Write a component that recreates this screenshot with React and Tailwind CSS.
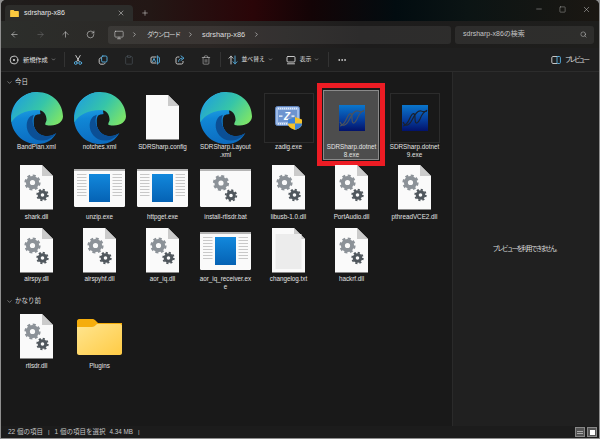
import React from 'react'
import {
  ArrowLeft, ArrowRight, ArrowUp, RotateCw, Monitor, ChevronRight, ChevronDown, Plus, X, Minus, Square,
  Clipboard, Trash2, MoreHorizontal, Search,
} from 'lucide-react'

const font = { fontFamily: '"Liberation Sans", "Noto Sans CJK JP", sans-serif' }
const BLUE = '#58b4e8'
const GRAY = '#d8d8d8'

// big gear sits at the origin, small one below right
const Gears = ({ x = 0, y = 0 }) => (
  <g transform={`translate(${x} ${y})`}>
    <circle r="4.6" fill="none" stroke="#8c9298" strokeWidth="4" />
    <circle r="7" fill="none" stroke="#8c9298" strokeWidth="2.2" strokeDasharray="3 2.5" />
    <circle cx="10" cy="12.5" r="3.3" fill="none" stroke="#50575d" strokeWidth="3" />
    <circle cx="10" cy="12.5" r="5.3" fill="none" stroke="#50575d" strokeWidth="1.8" strokeDasharray="2.1 2" />
  </g>
)

const Page = ({ children }) => (
  <svg width="33" height="45" viewBox="0 0 33 45">
    <path d="M0 0H22L33 11V44.5H0Z" fill="#fafafa" />
    <path d="M22 0V11H33Z" fill="#cbcbcb" />
    {children}
  </svg>
)

const DllIcon = () => <Page><Gears x="12.5" y="17.5" /></Page>

const TxtIcon = () => <Page><rect x="3.5" y="6" width="26" height="35" fill="#ececec" /></Page>

const ConfigIcon = () => <Page />

const BatIcon = () => (
  <svg width="51" height="38" viewBox="0 0 51 38">
    <rect width="51" height="38" rx="1.5" fill="#fafafa" />
    <rect width="51" height="2" fill="#b4b4b4" />
    <Gears x="21" y="14" />
  </svg>
)

const WindowIcon = ({ id }) => (
  <svg width="51" height="38" viewBox="0 0 51 38">
    <defs>
      <linearGradient id={id} x1="0" y1="0" x2="0" y2="1">
        <stop offset="0" stopColor="#1288dc" />
        <stop offset="1" stopColor="#0562b4" />
      </linearGradient>
    </defs>
    <rect width="51" height="38" rx="1.5" fill="#fafafa" />
    <rect width="51" height="2" fill="#b4b4b4" />
    <rect x="15" y="5" width="21" height="28" fill={`url(#${id})`} />
    {[5, 8, 11, 14, 17, 20, 23, 26].map((y) => (
      <g key={y}>
        <rect x="3" y={y} width="9.5" height="1" fill="#c8c8c8" />
        <rect x="38.5" y={y} width="9.5" height="1" fill="#c8c8c8" />
      </g>
    ))}
  </svg>
)

const EdgeIcon = ({ id }) => (
  <svg width="52" height="52" viewBox="0 0 155 155">
    <defs>
      <linearGradient id={`${id}a`} x1="0.3" y1="0" x2="0.4" y2="1">
        <stop offset="0" stopColor="#36c3f2" />
        <stop offset="0.5" stopColor="#1087d6" />
        <stop offset="1" stopColor="#0c6cc0" />
      </linearGradient>
      <linearGradient id={`${id}b`} x1="0" y1="0.2" x2="1" y2="0.7">
        <stop offset="0" stopColor="#1f9fdc" />
        <stop offset="0.55" stopColor="#36c5a8" />
        <stop offset="1" stopColor="#7ae36a" />
      </linearGradient>
    </defs>
    <path d="M78 0C35 0 0 35 0 78C0 120 35 155 78 155C108 155 124 142 135 122C112 138 84 132 72 110C62 90 72 72 88 66L78 0Z" fill={`url(#${id}a)`} />
    <path d="M72 70C86 62 106 68 112 84L134 122C112 138 84 132 74 110C66 94 66 78 72 70Z" fill="#191919" />
    <path d="M78 0C125 0 155 36 155 72C155 92 132 104 104 98C100 96 104 90 106 84C106 68 98 54 78 54C42 54 14 70 1 90C0 40 35 0 78 0Z" fill={`url(#${id}b)`} />
    <path d="M58 72C44 84 42 110 58 130C74 150 112 152 135 122C112 138 84 132 72 110C64 96 62 84 68 68Z" fill="#0b4f95" />
  </svg>
)

const ZadigIcon = () => (
  <svg width="27" height="24" viewBox="0 0 27 24">
    <rect x="0.5" y="0.5" width="24" height="19" rx="2" fill="#9dbbe8" stroke="#5f82ba" strokeWidth="1" />
    <rect x="3" y="4" width="19" height="12" fill="#6e94cf" />
    <path d="M3 2.5H22M3 17.8H22" stroke="#e2ecfa" strokeWidth="1.4" strokeDasharray="1 1" />
    <rect x="4" y="9.5" width="3.5" height="1.2" fill="#fff" />
    <rect x="16.5" y="9.5" width="3" height="1.2" fill="#fff" />
    <text x="12" y="14" textAnchor="middle" fontSize="10" fontWeight="700" fontStyle="italic" fill="#fff" fontFamily="Liberation Sans">Z</text>
    <path d="M20 11L27 13.5V18C27 21 23 23 20 24C17 23 13 21 13 18V13.5Z" fill="#f4c22c" />
    <path d="M20 11V17.5H13V13.5ZM20 17.5H27V18C27 21 23 23 20 24Z" fill="#3f83d8" />
  </svg>
)

const SdrIcon = ({ id, line }) => (
  <svg width="26" height="26" viewBox="0 0 26 26">
    <defs>
      <linearGradient id={id} x1="0" y1="0" x2="0" y2="1">
        <stop offset="0" stopColor="#0a76cc" />
        <stop offset="0.55" stopColor="#063f9e" />
        <stop offset="1" stopColor="#02126a" />
      </linearGradient>
    </defs>
    <rect width="26" height="26" fill={`url(#${id})`} />
    <path d="M1 21C5 21 7 15 9 11C11 7 13 8 13 13C13 19 15 20 18 14C20 9 22 6 25 6" fill="none" stroke={line} strokeWidth="1.2" />
    <path d="M1 17C3 22 7 21 10 15C13 9 16 5 19 6C22 7 24 7 25 5" fill="none" stroke={line} strokeWidth="1.2" />
  </svg>
)

const FolderIcon = () => (
  <svg width="45" height="36" viewBox="0 0 45 36">
    <defs>
      <linearGradient id="folderFront" x1="0" y1="0" x2="1" y2="1">
        <stop offset="0" stopColor="#ffe58f" />
        <stop offset="1" stopColor="#ffcb45" />
      </linearGradient>
    </defs>
    <path d="M2 0H16C17 0 18 1 19 2L21 4H45V12H0V2C0 1 1 0 2 0Z" fill="#f5ad0c" />
    <path d="M0 34V8H15C17 8 18 7 20 5H43C44 5 45 6 45 7V34C45 35 44 36 43 36H2C1 36 0 35 0 34Z" fill="url(#folderFront)" />
  </svg>
)

// toolbar glyphs
const Glyph = ({ children, w = 10 }) => (
  <svg width={w} height="10" viewBox="0 0 10 10" fill="none" strokeWidth="0.9" strokeLinecap="round" strokeLinejoin="round">{children}</svg>
)

const NewGlyph = () => <Glyph><circle cx="5" cy="5" r="3.9" stroke={GRAY} /><circle cx="5" cy="5" r="1.1" fill={GRAY} /></Glyph>
const CutGlyph = () => (
  <Glyph>
    <path d="M2.8 .5L6.2 6.5M7.2 .5L3.8 6.5" stroke={GRAY} />
    <circle cx="2.8" cy="8" r="1.4" stroke={BLUE} />
    <circle cx="7.2" cy="8" r="1.4" stroke={BLUE} />
  </Glyph>
)
const CopyGlyph = () => (
  <Glyph>
    <rect x="3.6" y="1" width="5.4" height="6" rx="1.2" stroke={BLUE} />
    <path d="M3 2.8C1.8 3 1.2 3.6 1.2 4.6V7.4C1.2 8.4 2 9.2 3 9.2H5.4C6.2 9.2 6.8 8.8 7 8.2" stroke={GRAY} />
  </Glyph>
)
const RenameGlyph = () => (
  <Glyph>
    <path d="M6 2H2C1.4 2 1 2.4 1 3V7C1 7.6 1.4 8 2 8H6" stroke={GRAY} />
    <path d="M7.4 .8V9.2M8 2H8.6C9 2 9.4 2.4 9.4 3V7C9.4 7.6 9 8 8.6 8H8" stroke={BLUE} />
    <path d="M2.6 6.6L4 3.4L5.4 6.6" stroke={BLUE} />
  </Glyph>
)
const ShareGlyph = () => (
  <Glyph>
    <path d="M4 2H2.4C1.6 2 1 2.6 1 3.4V7.6C1 8.4 1.6 9 2.4 9H6.6C7.4 9 8 8.4 8 7.6V6.4" stroke={GRAY} />
    <path d="M3.6 6.4C3.8 4.4 5 3.2 7 3.2M6 .9L9 3.2L6 5.4" stroke={BLUE} />
  </Glyph>
)
const SortGlyph = () => (
  <Glyph>
    <path d="M3 9V1.2M1 3.2L3 1.2L5 3.2" stroke={GRAY} />
    <path d="M7 1V8.8M5 6.8L7 8.8L9 6.8" stroke={BLUE} />
  </Glyph>
)
const ViewGlyph = () => <Glyph><rect x="1" y="1.5" width="8" height="5.5" rx="1" stroke={GRAY} /><path d="M1.5 8.8H8.5" stroke={GRAY} /></Glyph>
const PreviewGlyph = () => (
  <Glyph>
    <path d="M6 1.5H2C1.4 1.5 .8 2 .8 2.7V7.3C.8 8 1.4 8.5 2 8.5H6" stroke={GRAY} />
    <rect x="6" y="1.5" width="3.4" height="7" rx="1" stroke={BLUE} />
  </Glyph>
)

const FileItem = ({ icon, name, selected, box, h = 'h-[45px]', textClass = 'h-[15px] mt-[3px]' }) => (
  <div className="relative flex w-[63px] flex-col items-center">
    {selected && <div className="absolute left-[3px] top-[-2px] h-[70px] w-[56px] border border-[#8a8a8a] bg-[#4d4d4d]" />}
    <div className={`relative flex ${h} w-[52px] items-center justify-center`}>
      {box ? (
        <div className={`flex h-[50px] w-[50px] items-center justify-center border ${selected ? 'border-transparent' : 'border-[#2c2c2c]'}`}>{icon}</div>
      ) : icon}
    </div>
    <div className={`relative w-[60px] whitespace-pre-line text-center text-[6.3px] leading-[8px] text-[#e4e4e4] ${textClass}`}>{name}</div>
    {selected && <div className="absolute left-[-3px] top-[-9px] h-[83px] w-[68px] border-[5px] border-[#ed1c24]" />}
  </div>
)

const ToolIcon = ({ children }) => <div className="flex w-[25.6px] justify-center">{children}</div>

const SectionHead = ({ label }) => (
  <div className="flex h-[14px] items-center gap-[2px] pl-[1px] text-[#d8d8d8]">
    <ChevronDown size={7} strokeWidth={1.5} />
    <span className="text-[6.5px]">{label}</span>
  </div>
)

const Header = () => (
  <div className="bg-[linear-gradient(90deg,#1f1d1c_0%,#231715_25%,#2a0508_42%,#130406_52%,#020c10_66%,#0b1414_78%,#1b1712_100%)]">
    {/* tabs */}
    <div className="flex h-[21px] items-end pl-[4px]">
      <div className="flex h-[16px] w-[128px] items-center rounded-t-[4px] bg-[#2c2c2a] pl-[5px] pr-[8px]">
        <svg width="9" height="7" viewBox="0 0 10 8">
          <path d="M0 1C0 .5 .5 0 1 0H4L5 1H9C9.5 1 10 1.5 10 2V8H0Z" fill="#fbc93f" />
        </svg>
        <span className="ml-[5px] flex-1 text-[7px] text-[#e6e6e6]">sdrsharp-x86</span>
        <X size={8} strokeWidth={1.5} className="text-[#e0e0e0]" />
      </div>
      <div className="ml-[8px] flex h-[16px] items-center">
        <Plus size={8} strokeWidth={1.5} className="text-[#e0e0e0]" />
      </div>
      <div className="ml-auto flex h-[21px] items-center gap-[16px] pb-[3px] pr-[8px] text-[#e0e0e0]">
        <Minus size={8} strokeWidth={1.2} />
        <Square size={7} strokeWidth={1.2} />
        <X size={9} strokeWidth={1.2} />
      </div>
    </div>
    {/* nav */}
    <div className="flex h-[27px] items-center bg-[linear-gradient(90deg,#2c2e2b_0%,#2b2624_35%,#1d1c1c_60%,#1e1e1c_100%)]">
      <div className="flex w-[107px] items-center text-[#dcdcdc]">
        <div className="flex w-[26px] justify-center"><ArrowLeft size={9} strokeWidth={1.5} /></div>
        <div className="flex w-[26px] justify-center text-[#6c6c6c]"><ArrowRight size={9} strokeWidth={1.5} /></div>
        <div className="flex w-[25px] justify-center"><ArrowUp size={9} strokeWidth={1.5} /></div>
        <div className="flex w-[25px] justify-center"><RotateCw size={9} strokeWidth={1.5} /></div>
      </div>
      <div className="flex h-[18px] w-[343px] items-center rounded-[3px] bg-white/[0.07] pl-[6px] text-[#dedede]">
        <Monitor size={10} strokeWidth={1.3} />
        <ChevronRight size={7} className="ml-[7px]" />
        <span className="ml-[9px] text-[6.5px] tracking-[-1px]">ダウンロード</span>
        <ChevronRight size={7} className="ml-[7px]" />
        <span className="ml-[8px] text-[7.4px]">sdrsharp-x86</span>
        <ChevronRight size={7} className="ml-[8px]" />
      </div>
      <div className="ml-[4px] flex h-[18px] w-[139px] items-center rounded-[3px] bg-white/[0.07] pl-[8px] pr-[7px]">
        <span className="flex-1 text-[7px] text-[#c4c4c4]">sdrsharp-x86の検索</span>
        <Search size={7} strokeWidth={1.6} className="text-[#d4d4d4]" />
      </div>
    </div>
  </div>
)

const Toolbar = () => (
  <div className="flex h-[24px] items-center border-b border-[#2c2c2c] bg-[#1f1f1f] text-[#e0e0e0]">
    <div className="flex w-[63px] items-center pl-[8px]">
      <NewGlyph />
      <span className="ml-[4px] text-[6.2px]">新規作成</span>
      <ChevronDown size={5} className="ml-[3px]" />
    </div>
    <div className="h-[15px] w-px bg-[#333]" />
    <div className="flex items-center">
      <ToolIcon><CutGlyph /></ToolIcon>
      <ToolIcon><CopyGlyph /></ToolIcon>
      <ToolIcon><Clipboard size={10} strokeWidth={1.2} className="text-[#59636a]" /></ToolIcon>
      <ToolIcon><RenameGlyph /></ToolIcon>
      <ToolIcon><ShareGlyph /></ToolIcon>
      <ToolIcon><Trash2 size={10} strokeWidth={1.2} className="text-[#d8d8d8]" /></ToolIcon>
    </div>
    <div className="ml-[1px] h-[15px] w-px bg-[#333]" />
    <div className="ml-[7px] flex items-center">
      <SortGlyph />
      <span className="ml-[4px] text-[5.8px]">並べ替え</span>
      <ChevronDown size={5} className="ml-[3px]" />
    </div>
    <div className="ml-[13px] flex items-center">
      <ViewGlyph />
      <span className="ml-[4px] text-[5.8px]">表示</span>
      <ChevronDown size={5} className="ml-[3px]" />
    </div>
    <div className="ml-[9px] h-[15px] w-px bg-[#333]" />
    <MoreHorizontal size={10} className="ml-[8px]" />
    <div className="ml-auto flex items-center pr-[11px]">
      <PreviewGlyph />
      <span className="ml-[4px] text-[6.5px] tracking-[-1.9px]">プレビュー</span>
    </div>
  </div>
)

const FIRST = { h: 'h-[51px]', textClass: 'h-[22px]' }

export default function App() {
  const row2 = [
    { name: 'shark.dll', icon: <DllIcon /> },
    { name: 'unzip.exe', icon: <WindowIcon id="w1" /> },
    { name: 'httpget.exe', icon: <WindowIcon id="w2" /> },
    { name: 'install-rtlsdr.bat', icon: <BatIcon /> },
    { name: 'libusb-1.0.dll', icon: <DllIcon /> },
    { name: 'PortAudio.dll', icon: <DllIcon /> },
    { name: 'pthreadVCE2.dll', icon: <DllIcon /> },
  ]
  const row3 = [
    { name: 'airspy.dll', icon: <DllIcon /> },
    { name: 'airspyhf.dll', icon: <DllIcon /> },
    { name: 'aor_iq.dll', icon: <DllIcon /> },
    { name: 'aor_iq_receiver.ex\ne', icon: <WindowIcon id="w3" /> },
    { name: 'changelog.txt', icon: <TxtIcon /> },
    { name: 'hackrf.dll', icon: <DllIcon /> },
  ]

  return (
    <div className="h-[439px] w-[600px] overflow-hidden bg-[#8f8f8f] px-px" style={font}>
      <div className="flex h-[438px] flex-col overflow-hidden rounded-t-[5px] bg-[#191919]">
        <Header />
        <Toolbar />
        <div className="flex min-h-0 flex-1">
          <div className="w-[451px] pl-[4px] pt-[3px]">
            <SectionHead label="今日" />
            <div className="mt-[3px] grid grid-cols-[repeat(7,63px)]">
              <FileItem {...FIRST} name="BandPlan.xml" icon={<EdgeIcon id="e1" />} />
              <FileItem {...FIRST} name="notches.xml" icon={<EdgeIcon id="e2" />} />
              <FileItem {...FIRST} name="SDRSharp.config" icon={<ConfigIcon />} />
              <FileItem {...FIRST} name={'SDRSharp.Layout\n.xml'} icon={<EdgeIcon id="e3" />} />
              <FileItem {...FIRST} name="zadig.exe" icon={<ZadigIcon />} box />
              <FileItem {...FIRST} name={'SDRSharp.dotnet\n8.exe'} icon={<SdrIcon id="s8" line="#4a5360" />} box selected />
              <FileItem {...FIRST} name={'SDRSharp.dotnet\n9.exe'} icon={<SdrIcon id="s9" line="#1a2230" />} box />
            </div>
            <div className="grid grid-cols-[repeat(7,63px)]">
              {row2.map((f) => (
                <FileItem key={f.name} {...f} />
              ))}
            </div>
            <div className="grid grid-cols-[repeat(7,63px)]">
              {row3.map((f) => (
                <FileItem key={f.name} {...f} textClass="h-[19px] mt-[2px]" />
              ))}
            </div>
            <SectionHead label="かなり前" />
            <div className="mt-[6px] grid grid-cols-[repeat(7,63px)]">
              <FileItem name="rtlsdr.dll" icon={<DllIcon />} />
              <FileItem name="Plugins" icon={<FolderIcon />} />
            </div>
          </div>
          <div className="flex flex-1 items-center justify-center border-l border-[#2a2a2a] bg-[#202020]">
            <span className="text-[6.5px] tracking-[-1.7px] text-[#dcdcdc]">プレビューを利用できません。</span>
          </div>
        </div>
        <div className="flex h-[12px] items-center bg-[#1c1c1c] pl-[7px] pr-[2px] text-[#c8c8c8]">
          <span className="text-[6.5px]">22 個の項目</span>
          <span className="ml-[5px] text-[6px]">|</span>
          <span className="ml-[5px] text-[6.5px]">1 個の項目を選択</span>
          <span className="ml-[4px] text-[6.3px]">4.34 MB</span>
          <span className="ml-[5px] text-[6px]">|</span>
          <div className="ml-auto flex items-center gap-[2px]">
            <div className="flex h-[10px] w-[10px] flex-col justify-center gap-px border border-[#888] bg-[#555] px-px">
              <div className="h-px bg-[#aaa]" />
              <div className="h-px bg-[#aaa]" />
            </div>
            <div className="flex h-[10px] w-[10px] items-center justify-center border border-[#888] bg-[#555]">
              <div className="h-[5px] w-[5px] bg-white" />
            </div>
          </div>
        </div>
      </div>
    </div>
  )
}
